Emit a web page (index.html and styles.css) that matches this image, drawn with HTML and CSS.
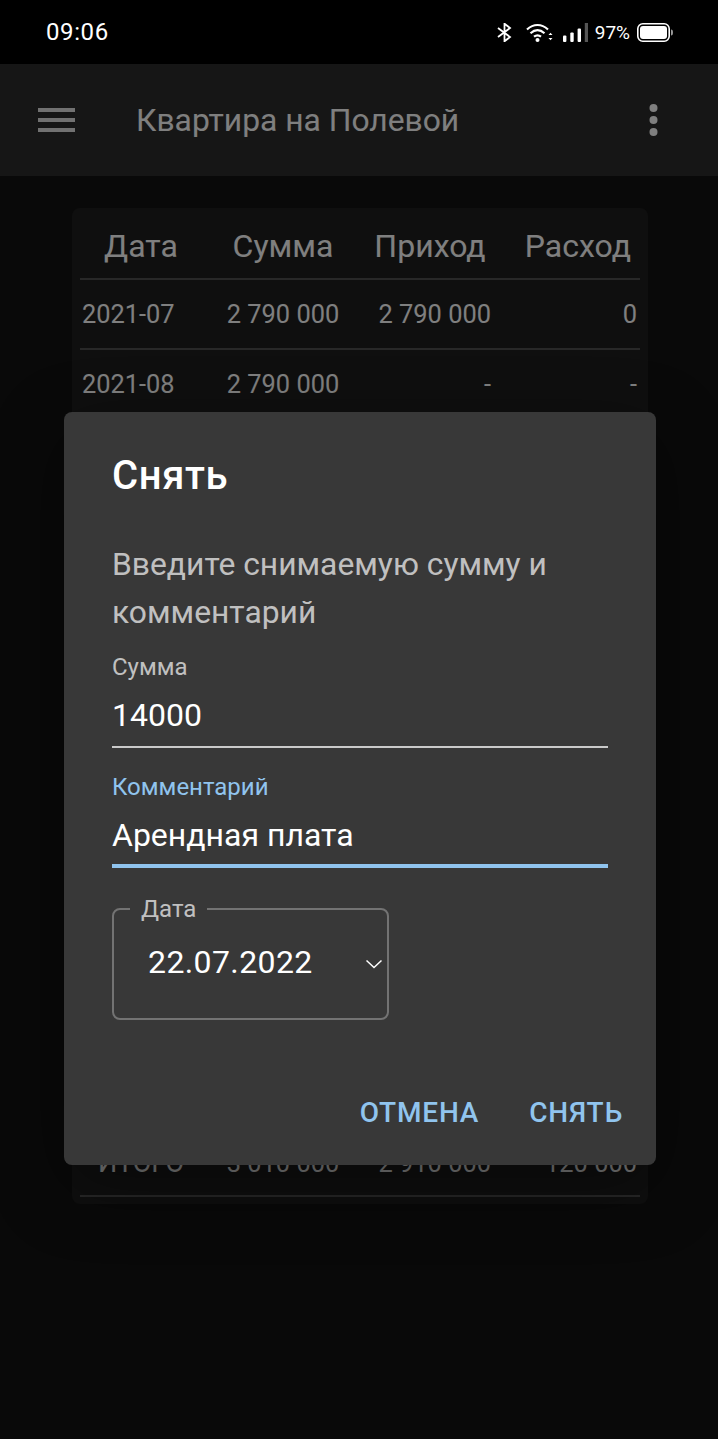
FILE: index.html
```html
<!DOCTYPE html>
<html lang="ru">
<head>
<meta charset="utf-8">
<title>Квартира на Полевой</title>
<link rel="stylesheet" href="styles.css">
</head>
<body>
<div class="page">
  <div class="statusbar">
    <span class="clock">09:06</span>
    <div class="status-icons">
      <svg class="ic-bt" width="15" height="19" viewBox="0 0 15 19"><path d="M1 5l12 9-5.500 4.300V.7L13 5 1 14" fill="none" stroke="#fff" stroke-width="1.800"/></svg>
      <svg class="ic-wifi" width="27" height="19" viewBox="0 0 27 19"><path d="M1 6.500C7.500.5 15.500.5 22 6.500M4.500 10.200c4.500-4 9.500-4 14 0M8 13.700c2.500-2 4.500-2 7 0" fill="none" stroke="#fff" stroke-width="2.200"/><circle cx="11.500" cy="17" r="2" fill="#fff"/><path d="M22.500 12l2-2.200 2 2.200zM22.500 15l2 2.200 2-2.200z" fill="#fff"/></svg>
      <svg class="ic-signal" width="25" height="19" viewBox="0 0 25 19"><rect x="0" y="12.500" width="3.400" height="6.500" rx="1" fill="#fff"/><rect x="7.300" y="9.500" width="3.400" height="9.500" rx="1" fill="#fff"/><rect x="14.600" y="5.500" width="3.400" height="13.500" rx="1" fill="#fff"/><rect x="21.800" y="0" width="3.200" height="19" fill="#555"/></svg>
      <span class="battery-text">97%</span>
      <svg class="ic-batt" width="36" height="19" viewBox="0 0 36 19"><rect x=".8" y=".8" width="31.400" height="17.400" rx="5" fill="none" stroke="#fff" stroke-width="1.600"/><rect x="3" y="3" width="27" height="13" rx="3" fill="#fff"/><path d="M34 6.500c1.500 0 2 1 2 3s-.5 3-2 3z" fill="#999"/></svg>
    </div>
  </div>

  <header class="appbar">
    <svg class="menu" width="37" height="24" viewBox="0 0 37 24"><path d="M0 0h37v4H0zM0 10h37v4H0zM0 20h37v4H0z" fill="#fff"/></svg>
    <h1 class="app-title">Квартира на Полевой</h1>
    <svg class="more" width="9" height="32" viewBox="0 0 9 32"><circle cx="4.500" cy="4" r="4" fill="#fff"/><circle cx="4.500" cy="16" r="4" fill="#fff"/><circle cx="4.500" cy="28" r="4" fill="#fff"/></svg>
  </header>

  <main class="content">
    <section class="card">
      <div class="row head"><span>Дата</span><span>Сумма</span><span>Приход</span><span>Расход</span></div>
      <div class="row"><span>2021-07</span><span>2 790 000</span><span>2 790 000</span><span>0</span></div>
      <div class="row"><span>2021-08</span><span>2 790 000</span><span>-</span><span>-</span></div>
      <div class="row total"><span>ИТОГО</span><span>3 010 000</span><span>2 910 000</span><span>120 000</span></div>
    </section>
  </main>

  <div class="scrim"></div>

  <div class="dialog">
    <h2 class="dlg-title">Снять</h2>
    <p class="dlg-text">Введите снимаемую сумму и комментарий</p>
    <div class="field">
      <label class="field-label">Сумма</label>
      <div class="field-value">14000</div>
    </div>
    <div class="field focused">
      <label class="field-label">Комментарий</label>
      <div class="field-value">Арендная плата</div>
    </div>
    <div class="select">
      <span class="select-label">Дата</span>
      <span class="select-value">22.07.2022</span>
      <svg class="chevron" width="18" height="10" viewBox="0 0 18 10"><path d="M1.500 1.500L9 8.500l7.500-7" fill="none" stroke="#fff" stroke-width="1.500"/></svg>
    </div>
    <div class="actions">
      <span class="btn">Отмена</span>
      <span class="btn">Снять</span>
    </div>
  </div>
</div>
</body>
</html>
```

FILE: styles.css
```css
* { box-sizing: border-box; }
html, body { margin: 0; padding: 0; background: #121212; }
body { font-family: Roboto, sans-serif; color: #fff; }
.page { position: relative; width: 718px; height: 1439px; overflow: hidden; }

.statusbar { position: relative; z-index: 3; height: 64px; background: #000; display: flex; align-items: center; justify-content: space-between; padding: 0 45px 0 46px; }
.clock { font-size: 24px; letter-spacing: .6px; }
.status-icons { display: flex; align-items: center; }
.ic-bt { margin-right: 14px; }
.ic-wifi { margin-right: 10px; }
.ic-signal { margin-right: 7px; }
.battery-text { font-size: 19px; margin-right: 7px; }

.appbar { height: 112px; background: #2c2c2c; display: flex; align-items: center; padding: 0 60px 0 38px; }
.menu { margin-right: 61px; opacity: .87; }
.app-title { flex: 1; margin: 0; font-size: 31.8px; font-weight: 400; color: #fff; }

.content { padding: 32px 70px 0 72px; }
.card { width: 576px; height: 996px; background: #1e1e1e; border-radius: 8px; padding: 0 8px 7px; display: flex; flex-direction: column; }
.row { display: grid; grid-template-columns: 122px 162px 132px 144px; height: 70px; align-items: center; border-bottom: 2px solid #515151; font-size: 25.4px; color: #fff; }
.row span { text-align: right; white-space: nowrap; }
.row span:nth-child(1) { text-align: left; padding-left: 2px; }
.row span:nth-child(2) { text-align: center; }
.row span:nth-child(3) { padding-right: 5px; }
.row span:nth-child(4) { padding-right: 3px; }
.head { height: 72px; font-size: 32px; }
.row.head span { text-align: center; padding: 6px 0 0; }
.row.head span:nth-child(4) { text-align: right; padding-right: 9px; }
.total { height: 77px; margin-top: auto; padding-top: 10px; }
.row.total span:nth-child(1) { font-size: 27px; text-align: center; padding: 0; }

.scrim { position: absolute; inset: 0; z-index: 1; background: rgba(0,0,0,.5); }

.dialog { position: absolute; z-index: 2; left: 64px; top: 412px; width: 592px; height: 753px; background: #383838; border-radius: 8px; padding: 0 48px; box-shadow: 0 22px 70px rgba(0,0,0,.45); }
.dlg-title { margin: 0; padding-top: 39px; font-size: 40px; line-height: 50px; font-weight: 500; letter-spacing: .6px; }
.dlg-text { margin: 39px 0 0; font-size: 31.8px; line-height: 48px; color: rgba(255,255,255,.7); }
.field { height: 119px; padding-top: 15px; }
.field + .field { height: 128px; padding-top: 16px; }
.field-label { display: block; font-size: 24px; line-height: 33px; color: rgba(255,255,255,.7); }
.field-value { height: 64px; font-size: 32px; line-height: 56px; border-bottom: 2px solid #c9c9c9; padding-top: 3px; }
.focused .field-label { color: #90c4ee; }
.focused .field-value { border-bottom: 4px solid #90c4ee; height: 64px; }

.select { position: relative; margin-top: 25px; width: 277px; height: 112px; border: 2px solid #737373; border-radius: 8px; display: flex; align-items: center; padding: 0 4px 0 34px; justify-content: space-between; }
.select-label { position: absolute; left: 16px; top: -15px; padding: 0 11px; background: #383838; font-size: 24px; line-height: 28px; color: rgba(255,255,255,.7); }
.select-value { font-size: 32px; letter-spacing: .4px; padding-bottom: 4px; }

.actions { position: absolute; right: 17px; bottom: 33px; display: flex; gap: 18px; }
.btn { padding: 0 16px; font-size: 28px; line-height: 38px; font-weight: 500; letter-spacing: .8px; text-transform: uppercase; color: #90c4ee; }
```
